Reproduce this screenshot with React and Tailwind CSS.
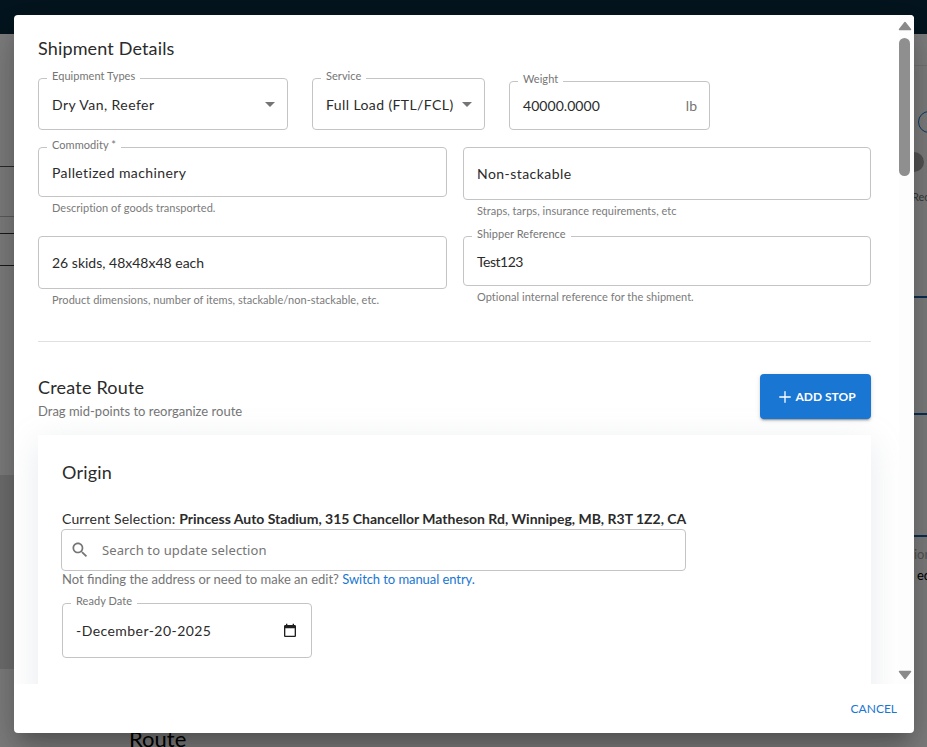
import React from 'react';
import { Plus } from 'lucide-react';

const sans = "font-['Lato',sans-serif]";

const Field = ({ label, value, boxClass = '', valueClass = 'tracking-[0.45px]', helper, children }) => (
  <div className="flex flex-col">
    <div className={`relative flex items-center rounded border border-[#c4c4c4] pl-[13px] pr-3 text-[14px] text-[#2b2b2b] ${boxClass}`}>
      {label && (
        <span className="absolute -top-[10px] left-[8px] bg-white px-[5px] text-[11px] leading-[14px] tracking-[0.05px] text-[#757575]">
          {label}
        </span>
      )}
      <span className={`flex-1 whitespace-nowrap ${valueClass}`}>{value}</span>
      {children}
    </div>
    {helper && <p className="ml-[14px] mt-1 whitespace-nowrap text-[11px] leading-[14px] tracking-[0.04px] text-[#7a7a7a]">{helper}</p>}
  </div>
);

const Caret = () => (
  <svg viewBox="0 0 24 24" className="-mr-[7px] h-6 w-6 shrink-0 fill-[#757575]">
    <path d="M7 10l5 5 5-5z" />
  </svg>
);

const ScrollArrow = ({ down }) => (
  <svg viewBox="0 0 14 10" className={`h-[10px] w-[14px] shrink-0 fill-[#8a8a8a] stroke-[#8a8a8a] ${down ? 'rotate-180' : ''}`}>
    <path d="M7 1.5 12.5 8.5H1.5Z" strokeLinejoin="round" strokeWidth="1.5" />
  </svg>
);

// what is left visible of the page behind the dialog
const PageBehind = () => (
  <div className={`flex h-[747px] w-[927px] flex-col overflow-hidden bg-white ${sans}`}>
    <div className="h-[34px] shrink-0 bg-[#0a2a3f]" />
    <div className="flex flex-1 justify-between">
      <div className="flex w-[14px] flex-col">
        <div className="mt-[132px] h-px bg-[#555]" />
        <div className="mt-[49px] h-px bg-[#bbb]" />
        <div className="mt-[16px] h-px bg-[#333]" />
        <div className="mt-[31px] h-px bg-[#333]" />
        <div className="mt-[209px] h-[194px] bg-[#e0e0e0]" />
      </div>
      <div className="-mb-[4px] ml-[115px] mt-auto text-[22px] leading-[24px] text-black">Route</div>
      <div className="ml-auto flex w-[13px] flex-col overflow-hidden">
        <div className="mt-[31px] h-px bg-[#e8e8e8]" />
        <div className="ml-[4px] mt-[45px] h-[22px] w-[22px] shrink-0 rounded-full border border-[#1976d2]" />
        <div className="-ml-[10px] mt-[19px] h-5 w-5 shrink-0 rounded-full bg-[#aaa]" />
        <div className="-ml-[2px] mt-[17px] whitespace-nowrap text-[11px] leading-4 text-[#777]">Rec</div>
        <div className="mt-[91px] h-[2px] shrink-0 bg-[#1a5ea8]" />
        <div className="mt-[115px] h-[2px] shrink-0 bg-[#1a5ea8]" />
        <div className="mt-[120px] h-[2px] shrink-0 bg-[#1a5ea8]" />
        <div className="mt-[9px] whitespace-nowrap text-[13px] leading-4 text-[#aaa]">ion</div>
        <div className="ml-[3px] mt-[5px] whitespace-nowrap text-[13px] leading-4 text-black">ed</div>
      </div>
    </div>
  </div>
);

export default function App() {
  return (
    <div className="relative h-[747px] w-[927px] overflow-hidden">
      <PageBehind />
      <div className="absolute inset-0 bg-black/50" />

      <div className={`absolute left-[14px] top-[15px] flex h-[718px] w-[900px] flex-col overflow-hidden rounded bg-white shadow-[0_11px_15px_-7px_rgba(0,0,0,0.2),0_24px_38px_3px_rgba(0,0,0,0.14),0_9px_46px_8px_rgba(0,0,0,0.12)] ${sans}`}>
        <div className="flex h-[669px] shrink-0">
          {/* Scrolling content, cut off by the footer */}
          <div className="flex-1 overflow-hidden pl-6 pr-7 pt-[23px]">
            <h2 className="text-[18px] leading-5 tracking-[0.15px] text-[#2b2b2b]">Shipment Details</h2>

            <div className="mt-5 flex items-end gap-6">
              <Field label="Equipment Types" value="Dry Van, Reefer" boxClass="h-[52px] w-[250px]"><Caret /></Field>
              <Field label="Service" value="Full Load (FTL/FCL)" valueClass="tracking-[0.4px]" boxClass="h-[52px] w-[173px]"><Caret /></Field>
              <Field label="Weight" value="40000.0000" valueClass="tracking-[0.05px]" boxClass="h-[49px] w-[201px]">
                <span className="text-[#757575]">lb</span>
              </Field>
            </div>

            <div className="mt-[17px] grid h-[89px] grid-cols-[409px_408px] gap-4">
              <Field label="Commodity *" value="Palletized machinery" valueClass="tracking-[0.4px]" boxClass="h-[50px] pt-px" helper="Description of goods transported." />
              <Field value="Non-stackable" boxClass="h-[53px]" helper="Straps, tarps, insurance requirements, etc" />
            </div>

            <div className="grid h-[71px] grid-cols-[409px_408px] gap-4">
              <Field value="26 skids, 48x48x48 each" valueClass="tracking-[0px]" boxClass="h-[53px]" helper="Product dimensions, number of items, stackable/non-stackable, etc." />
              <Field label="Shipper Reference" value="Test123" valueClass="tracking-[-0.5px]" boxClass="h-[50px] pt-px" helper="Optional internal reference for the shipment." />
            </div>

            <div className="mt-[34px] h-px bg-[#e0e0e0]" />

            <div className="mt-8 flex items-start justify-between">
              <div className="pt-[3px]">
                <h3 className="text-[18px] leading-5 tracking-[0.2px] text-[#2b2b2b]">Create Route</h3>
                <p className="mt-[6px] text-[13px] leading-4 tracking-[0px] text-[#757575]">Drag mid-points to reorganize route</p>
              </div>
              <button className="flex h-[45px] w-[111px] items-center justify-center gap-px rounded bg-[#1976d2] pl-px text-[12px] font-bold text-white shadow-[0_3px_1px_-2px_rgba(0,0,0,0.2),0_2px_2px_0_rgba(0,0,0,0.14),0_1px_5px_0_rgba(0,0,0,0.12)]">
                <Plus size={18} strokeWidth={1.75} />
                ADD STOP
              </button>
            </div>

            <div className="mt-4 bg-white px-6 pb-16 pt-[27px] shadow-[0_8px_32px_rgba(145,158,171,0.22)]">
              <h3 className="text-[18px] leading-5 tracking-[0.2px] text-[#2b2b2b]">Origin</h3>
              <p className="mt-[27px] whitespace-nowrap text-[14px] leading-5 tracking-[0.16px] text-[#2b2b2b]">
                Current Selection: <b className="font-bold tracking-[-0.01px]">Princess Auto Stadium, 315 Chancellor Matheson Rd, Winnipeg, MB, R3T 1Z2, CA</b>
              </p>
              <div className="-ml-px flex h-[42px] w-[625px] items-center rounded border border-[#c4c4c4] pl-2">
                <svg viewBox="0 0 24 24" className="h-5 w-5 fill-[#757575]">
                  <path d="M15.5 14h-.79l-.28-.27C15.41 12.59 16 11.11 16 9.5 16 5.91 13.09 3 9.5 3S3 5.91 3 9.5 5.91 16 9.5 16c1.61 0 3.09-.59 4.23-1.57l.27.28v.79l5 4.99L20.49 19l-4.99-5zm-6 0C7.01 14 5 11.99 5 9.5S7.01 5 9.5 5 14 7.01 14 9.5 11.99 14 9.5 14z" />
                </svg>
                <span className="ml-3 pt-px font-['Noto_Sans',sans-serif] text-[13px] tracking-[0.12px] text-[#757575]">Search to update selection</span>
              </div>
              <p className="h-4 whitespace-nowrap text-[13px] leading-4 tracking-[0px] text-[#757575]">
                Not finding the address or need to make an edit? <span className="tracking-[-0.07px] text-[#1976d2]">Switch to manual entry.</span>
              </p>
              <div className="mt-4 w-[250px]">
                <Field label="Ready Date" value="-December-20-2025" boxClass="h-[55px]">
                  <svg viewBox="0 0 24 24" className="mr-px h-4 w-4 fill-[#1f1f1f]">
                    <path d="M19 3h-1V1h-2v2H8V1H6v2H5c-1.11 0-2 .9-2 2v14c0 1.1.89 2 2 2h14c1.1 0 2-.9 2-2V5c0-1.1-.9-2-2-2zm0 16H5V8h14v11z" />
                  </svg>
                </Field>
              </div>
            </div>
          </div>

          {/* Scrollbar */}
          <div className="flex w-[15px] shrink-0 flex-col items-center bg-[#fdfdfd] pb-1 pr-1 pt-[6px]">
            <ScrollArrow />
            <div className="mt-[7px] h-[138px] w-[11px] shrink-0 rounded-full bg-[#8f8f8f]" />
            <div className="flex-1" />
            <ScrollArrow down />
          </div>
        </div>

        <div className="flex flex-1 items-center justify-end pr-[17px]">
          <button className="text-[12px] tracking-[0px] text-[#1976d2]">CANCEL</button>
        </div>
      </div>
    </div>
  );
}
